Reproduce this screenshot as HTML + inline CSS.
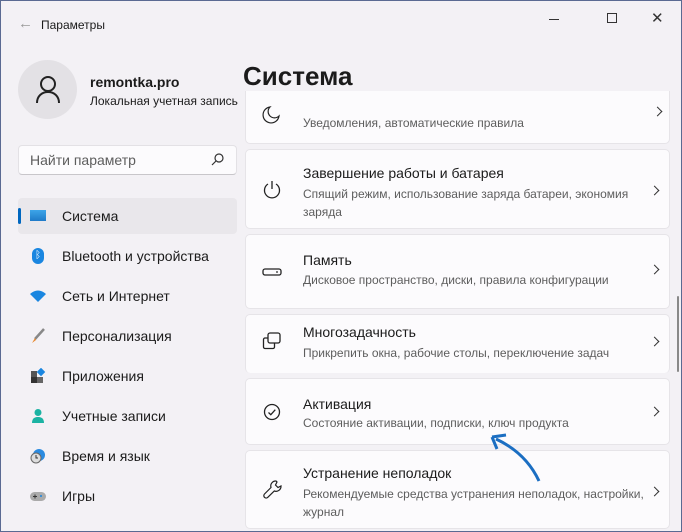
<!DOCTYPE html>
<html><head><meta charset="utf-8"><style>
*{margin:0;padding:0;box-sizing:border-box}
body{width:682px;height:532px;overflow:hidden;background:#f3f1f5;font-family:"Segoe UI","Liberation Sans",sans-serif;color:#1b1b1b;position:relative;border:1px solid #5a6a92}
.abs{position:absolute}
.nav{position:absolute;left:17px;width:219px;height:36px;font-size:14px;line-height:36px}
.nav span{position:absolute;left:44px;top:0}
.nav .ic{position:absolute;left:12px;top:10px;width:16px;height:16px}
.card{position:absolute;left:244px;width:425px;background:#fcfbfd;border:1px solid #e6e4e8;border-radius:5px}
.card .t{position:absolute;left:57px;font-size:14px;color:#1b1b1b}
.card .s{position:absolute;left:57px;font-size:12px;color:#5d5d5d;line-height:18px}
.card .chev{position:absolute;left:408px;width:7px;height:7px;border-right:1.3px solid #333;border-top:1.3px solid #333;transform:rotate(45deg)}
.card svg{position:absolute;left:16px}
</style></head><body>
<div class="abs" style="left:17px;top:14px;font-size:15px;color:#999">&#8592;</div>
<div class="abs" style="left:40px;top:17px;font-size:12px">Параметры</div>
<div class="abs" style="left:548px;top:18px;width:10px;border-top:1px solid #333"></div>
<div class="abs" style="left:606px;top:12px;width:10px;height:10px;border:1px solid #333"></div>
<div class="abs" style="left:650px;top:8px;font-size:15px;color:#333">✕</div>
<div class="abs" style="left:17px;top:59px;width:59px;height:59px;border-radius:50%;background:#e3e1e5"></div>
<svg class="abs" style="left:33px;top:74px" width="28" height="30" viewBox="0 0 28 30"><circle cx="14" cy="9" r="7" fill="none" stroke="#222" stroke-width="2"/><path d="M3 28c0-7 5-11 11-11s11 4 11 11" fill="none" stroke="#222" stroke-width="2"/></svg>
<div class="abs" style="left:89px;top:73px;font-size:14px;font-weight:600">remontka.pro</div>
<div class="abs" style="left:89px;top:93px;font-size:12px">Локальная учетная запись</div>
<div class="abs" style="left:242px;top:60px;font-size:26px;font-weight:600">Система</div>
<div class="abs" style="left:17px;top:144px;width:219px;height:30px;background:#fcfbfd;border:1px solid #e3e1e5;border-bottom-color:#c8c6ca;border-radius:4px;font-size:14px;color:#5d5d5d;padding:6px 0 0 11px">Найти параметр</div>
<svg class="abs" style="left:210px;top:152px" width="13" height="13" viewBox="0 0 13 13"><circle cx="8" cy="5" r="4" fill="none" stroke="#333" stroke-width="1.2"/><path d="M5 8L1 12" stroke="#333" stroke-width="1.2"/></svg>
<div class="nav" style="top:197px;background:#e9e7eb;border-radius:4px"><div class="abs" style="left:0;top:10px;width:3px;height:16px;border-radius:2px;background:#0067c0"></div><div class="ic" style="background:linear-gradient(#3da5e8,#1f7ac8);height:11px;top:12px"></div><span>Система</span></div>
<div class="nav" style="top:237px"><div class="ic" style="background:#1a86e0;border-radius:8px;width:12px;left:14px;color:#fff;font-size:10px;line-height:16px;text-align:center">ᛒ</div><span>Bluetooth и устройства</span></div>
<div class="nav" style="top:277px"><svg class="ic" viewBox="0 0 16 16"><path d="M0 6Q8 -1 16 6L8 14Z" fill="#1a86e0"/></svg><span>Сеть и Интернет</span></div>
<div class="nav" style="top:317px"><svg class="ic" viewBox="0 0 16 16"><path d="M14 1L5 11" stroke="#888" stroke-width="2.5"/><path d="M5 10L2 15L6 12Z" fill="#e8872c"/></svg><span>Персонализация</span></div>
<div class="nav" style="top:357px"><svg class="ic" viewBox="0 0 16 16"><rect x="1" y="3" width="6" height="6" fill="#555"/><rect x="1" y="9" width="6" height="6" fill="#333"/><rect x="7" y="9" width="6" height="6" fill="#666"/><rect x="8" y="1" width="6" height="6" fill="#1a86e0" transform="rotate(45 11 4)"/></svg><span>Приложения</span></div>
<div class="nav" style="top:397px"><svg class="ic" viewBox="0 0 16 16"><circle cx="8" cy="4.5" r="3.5" fill="#1bb3a3"/><path d="M2 15c0-5 3-6 6-6s6 1 6 6Z" fill="#1bb3a3"/></svg><span>Учетные записи</span></div>
<div class="nav" style="top:437px"><svg class="ic" viewBox="0 0 16 16"><circle cx="9" cy="7" r="6" fill="#2b8be0"/><circle cx="6" cy="10" r="5" fill="#ddd" stroke="#666"/><path d="M6 7v3h2" stroke="#333" fill="none"/></svg><span>Время и язык</span></div>
<div class="nav" style="top:477px"><svg class="ic" viewBox="0 0 16 16"><rect x="0" y="4" width="16" height="9" rx="4.5" fill="#aaa"/><path d="M3 8.5h4M5 6.5v4" stroke="#333"/><circle cx="11" cy="8" r="1" fill="#1a86e0"/></svg><span>Игры</span></div>

<div class="card" style="top:90px;height:53px;border-top:none;border-radius:0 0 5px 5px"><div class="s" style="top:23px">Уведомления, автоматические правила</div><div class="chev" style="top:17px"></div>
<svg style="top:14px" width="20" height="20" viewBox="0 0 20 20"><path d="M8 2A8 8 0 1 0 17 11A6 6 0 0 1 8 2Z" fill="none" stroke="#222" stroke-width="1.2"/></svg></div>
<div class="card" style="top:148px;height:80px"><div class="t" style="top:15px">Завершение работы и батарея</div><div class="s" style="top:35px">Спящий режим, использование заряда батареи, экономия<br>заряда</div><div class="chev" style="top:37px;left:405px"></div>
<svg style="top:30px" width="20" height="20" viewBox="0 0 20 20"><path d="M6 4A7.5 7.5 0 1 0 14 4" fill="none" stroke="#222" stroke-width="1.3"/><path d="M10 1v8" stroke="#222" stroke-width="1.3"/></svg></div>
<div class="card" style="top:233px;height:75px"><div class="t" style="top:17px">Память</div><div class="s" style="top:36px">Дисковое пространство, диски, правила конфигурации</div><div class="chev" style="top:31px;left:405px"></div>
<svg style="top:28px" width="20" height="20" viewBox="0 0 20 20"><rect x="1" y="6" width="18" height="6" rx="2" fill="none" stroke="#222" stroke-width="1.3"/><circle cx="15" cy="9" r=".9" fill="#222"/></svg></div>
<div class="card" style="top:313px;height:59px;border-bottom:none"><div class="t" style="top:9px">Многозадачность</div><div class="s" style="top:29px">Прикрепить окна, рабочие столы, переключение задач</div><div class="chev" style="top:23px;left:405px"></div>
<svg style="top:16px" width="20" height="20" viewBox="0 0 20 20"><rect x="6" y="2" width="12" height="10" rx="2" fill="none" stroke="#222" stroke-width="1.3"/><path d="M6 7H3a1.5 1.5 0 0 0-1.5 1.5V16a1.5 1.5 0 0 0 1.5 1.5h8a1.5 1.5 0 0 0 1.5-1.5v-4" fill="none" stroke="#222" stroke-width="1.3"/></svg></div>
<div class="card" style="top:377px;height:67px"><div class="t" style="top:17px">Активация</div><div class="s" style="top:35px">Состояние активации, подписки, ключ продукта</div><div class="chev" style="top:29px;left:405px"></div>
<svg style="top:23px" width="20" height="20" viewBox="0 0 20 20"><circle cx="10" cy="10" r="7.5" fill="none" stroke="#222" stroke-width="1.3"/><path d="M6.5 10.5l2.3 2.2 4.5-5" fill="none" stroke="#222" stroke-width="1.3"/></svg></div>
<div class="card" style="top:449px;height:79px"><div class="t" style="top:14px">Устранение неполадок</div><div class="s" style="top:34px">Рекомендуемые средства устранения неполадок, настройки,<br>журнал</div><div class="chev" style="top:37px;left:405px"></div>
<svg style="top:28px" width="22" height="22" viewBox="0 0 22 22"><path d="M14 2a5 5 0 0 0-5 6.5L2.5 15a2.3 2.3 0 0 0 3.3 3.3L12.3 12A5 5 0 0 0 19 7l-3 1.5-2.5-2.5L15 3A5 5 0 0 0 14 2Z" fill="none" stroke="#222" stroke-width="1.2"/></svg></div>

<div class="abs" style="left:676px;top:295px;width:2px;height:76px;background:#888;border-radius:1px"></div>
<svg class="abs" style="left:485px;top:430px" width="60" height="55" viewBox="0 0 60 55"><path d="M53 50Q40 22 10 8" fill="none" stroke="#1b6ec2" stroke-width="3"/><path d="M6 6L20 4M6 6L11 18" stroke="#1b6ec2" stroke-width="3" fill="none"/></svg>
</body></html>
